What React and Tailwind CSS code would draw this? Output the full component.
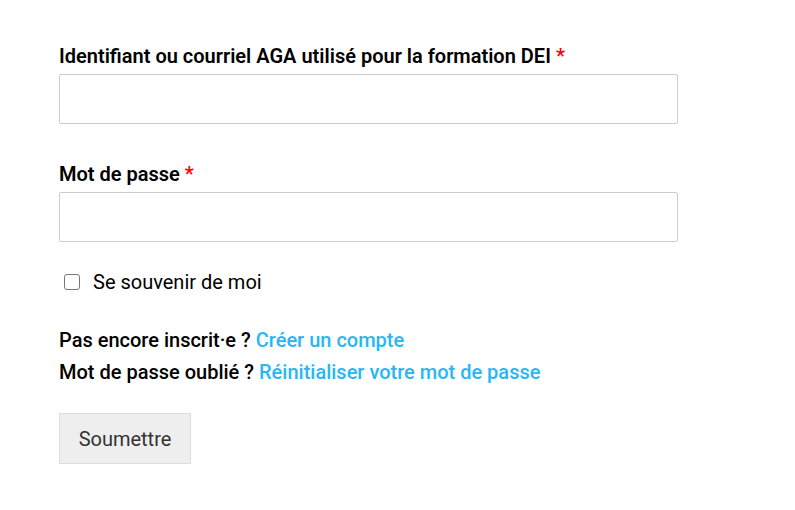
import React from 'react';

const Field = ({ label, type }) => (
  <div className="mb-[37px]">
    <label className="block text-[20px] leading-[27px] font-semibold text-black mb-[4px]">
      {label} <span className="text-[#ff0000]">*</span>
    </label>
    <input
      type={type}
      className="block w-[619px] h-[50px] border border-[#cccccc] rounded-[2px] bg-white px-3 outline-none"
    />
  </div>
);

const App = () => {
  return (
    <div className="min-h-[510px] bg-white pl-[59px] pt-[43px] font-['Roboto',sans-serif]">
      <Field label="Identifiant ou courriel AGA utilisé pour la formation DEI" type="text" />
      <Field label="Mot de passe" type="password" />

      <label className="-mt-[10px] flex items-center gap-[13px] pl-[5px] text-[20px] leading-[27px] text-black">
        <input
          type="checkbox"
          className="appearance-none shrink-0 w-[16px] h-[16px] m-0 -mt-[2px] border border-[#767676] rounded-[3px] bg-white"
        />
        <span>Se souvenir de moi</span>
      </label>

      <div className="mt-[28px] text-[20px] leading-[32px] font-medium text-black">
        <p>
          Pas encore inscrit·e ? <a href="#" className="text-[#29b6f6]">Créer un compte</a>
        </p>
        <p>
          Mot de passe oublié ? <a href="#" className="text-[#29b6f6]">Réinitialiser votre mot de passe</a>
        </p>
      </div>

      <button
        type="button"
        className="mt-[25px] w-[132px] h-[51px] bg-[#eeeeee] border border-[#dddddd] text-[20px] text-[#333333]"
      >
        Soumettre
      </button>
    </div>
  );
};

export default App;
